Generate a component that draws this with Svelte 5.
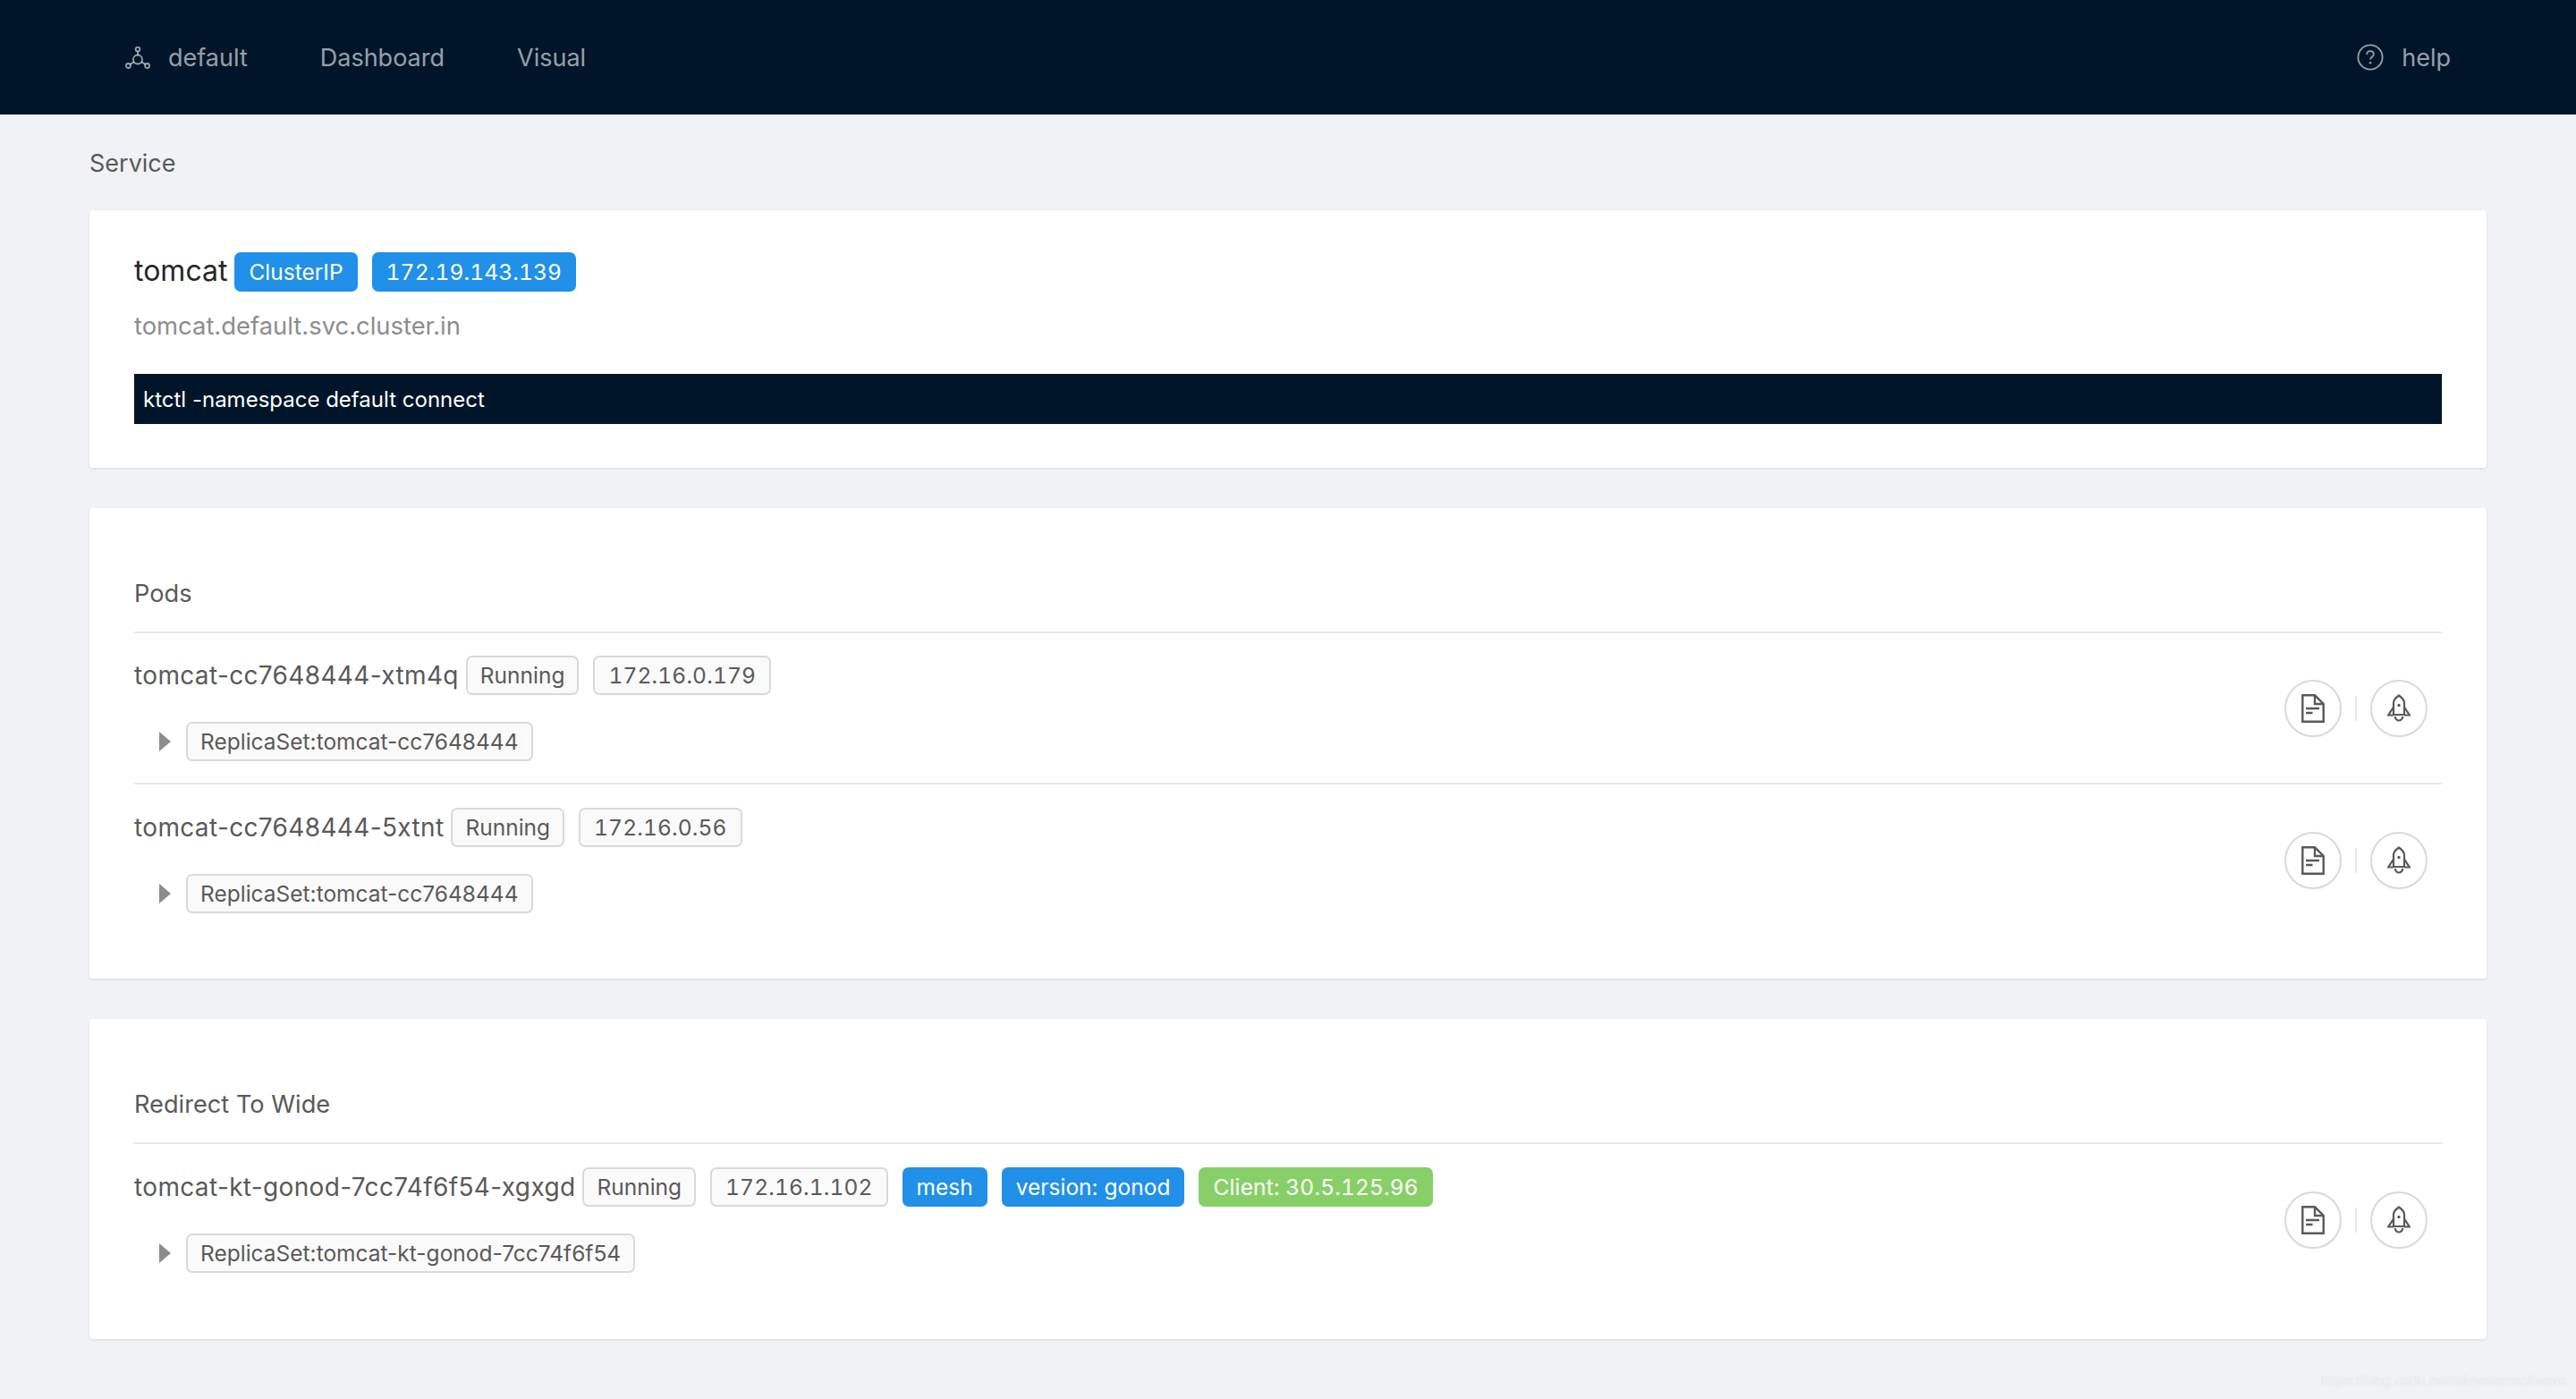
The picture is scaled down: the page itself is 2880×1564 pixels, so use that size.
<script lang="ts">
  const pods = [
    { name: 'tomcat-cc7648444-xtm4q', ip: '172.16.0.179', rs: 'ReplicaSet:tomcat-cc7648444', tags: [] },
    { name: 'tomcat-cc7648444-5xtnt', ip: '172.16.0.56', rs: 'ReplicaSet:tomcat-cc7648444', tags: [] }
  ];
  const wide = [
    {
      name: 'tomcat-kt-gonod-7cc74f6f54-xgxgd',
      ip: '172.16.1.102',
      rs: 'ReplicaSet:tomcat-kt-gonod-7cc74f6f54',
      tags: [
        { text: 'mesh', color: 'blue' },
        { text: 'version: gonod', color: 'blue' },
        { text: 'Client: 30.5.125.96', color: 'green ip' }
      ]
    }
  ];
  const sections = [
    { title: 'Pods', rows: pods, cls: 'pods' },
    { title: 'Redirect To Wide', rows: wide, cls: 'wide' }
  ];
</script>

<header class="nav">
  <div class="nav-left">
    <span class="nav-item first">
      <svg class="ns-icon" viewBox="0 0 28 25" fill="none" stroke="currentColor" stroke-width="1.800">
        <circle cx="14" cy="3" r="2.400" />
        <circle cx="14" cy="14.500" r="5" />
        <circle cx="3.400" cy="21.500" r="2.500" />
        <circle cx="24.600" cy="21.500" r="2.500" />
        <path d="M14 5.400v4.100M5.500 20.100l4.300-2.900M22.500 20.100l-4.300-2.900" />
      </svg>
      default
    </span>
    <span class="nav-item">Dashboard</span>
    <span class="nav-item">Visual</span>
  </div>
  <span class="nav-item help">
    <svg class="help-icon" viewBox="0 0 30 30" fill="none" stroke="currentColor" stroke-width="1.800">
      <circle cx="15" cy="15" r="13.600" />
      <path d="M11.200 12c0-2.300 1.700-3.800 3.800-3.800s3.800 1.400 3.800 3.500c0 3-3.800 3-3.800 5.900" />
      <circle cx="15" cy="21.300" r="1.300" fill="currentColor" stroke="none" />
    </svg>
    help
  </span>
</header>

<main class="page">
  <div class="crumb">Service</div>

  <section class="card service">
    <div class="svc-head">
      <span class="svc-name">tomcat</span>
      <span class="tag blue">ClusterIP</span>
      <span class="tag blue ip">172.19.143.139</span>
    </div>
    <div class="svc-domain">tomcat.default.svc.cluster.in</div>
    <div class="cmd">ktctl -namespace default connect</div>
  </section>

  {#each sections as section}
    <section class="card list {section.cls}">
      <h2 class="list-title">{section.title}</h2>
      {#each section.rows as row}
        <div class="row">
          <div class="row-main">
            <div class="row-head">
              <span class="pod-name">{row.name}</span>
              <span class="tag plain">Running</span>
              <span class="tag plain ip">{row.ip}</span>
              {#each row.tags as t}
                <span class="tag {t.color}">{t.text}</span>
              {/each}
            </div>
            <div class="row-sub">
              <span class="caret"></span>
              <span class="tag plain rs">{row.rs}</span>
            </div>
          </div>
          <div class="actions">
            <button class="round" aria-label="logs">
              <svg viewBox="0 0 26 32" width="26" height="32" fill="none" stroke="#595959" stroke-width="2.400">
                <path d="M1.300 1.300h13.700l9.700 9.700v19.700H1.300z" />
                <path d="M15 1.300v9.700h9.700" />
                <path d="M5 16h15M5 21h7.500" />
              </svg>
            </button>
            <span class="sep"></span>
            <button class="round" aria-label="deploy">
              <svg viewBox="0 0 26 31" width="26" height="31" fill="none" stroke="#595959" stroke-width="2.200">
                <path d="M13 1.500c2.500 1.800 6 4.500 6 8V23H7V9.500c0-3.500 3.500-6.200 6-8z" />
                <path d="M7 14.500L1.200 23.500H7M19 14.500l5.800 9H19" />
                <path d="M8.500 25c.8 2.800 2.300 4.500 4.500 4.500s3.700-1.700 4.500-4.500" />
                <circle cx="13" cy="12.500" r="1.700" fill="#595959" stroke="none" />
              </svg>
            </button>
          </div>
        </div>
      {/each}
    </section>
  {/each}
</main>

<div class="watermark">https://blog.csdn.net/alisystemsoftware</div>

<style>
  :global(body) {
    margin: 0;
    background: #f0f2f5;
    font-family: Inter, "Open Sans", sans-serif;
    color: #595959;
  }

  .nav {
    height: 128px;
    background: #001529;
    display: flex;
    align-items: center;
    justify-content: space-between;
    padding: 0 140px;
    box-sizing: border-box;
    color: rgba(255, 255, 255, 0.6);
    font-size: 27px;
  }

  .nav-left {
    display: flex;
    align-items: center;
    gap: 81px;
  }

  .nav-item {
    display: inline-flex;
    align-items: center;
  }

  .ns-icon {
    width: 28px;
    height: 25px;
    margin-right: 20px;
  }

  .help-icon {
    width: 30px;
    height: 30px;
    margin-right: 20px;
  }

  .page {
    padding: 0 100px;
  }

  .crumb {
    height: 107px;
    padding-top: 2px;
    box-sizing: border-box;
    display: flex;
    align-items: center;
    font-size: 27px;
    color: #595959;
  }

  .card {
    background: #fff;
    border-radius: 4px;
    box-shadow: 0 1px 3px rgba(0, 0, 0, 0.1);
    padding: 0 50px;
    margin-bottom: 45px;
  }

  .service {
    height: 288px;
    box-sizing: border-box;
    padding-top: 47px;
  }

  .svc-head {
    display: flex;
    align-items: center;
    height: 44px;
  }

  .svc-name {
    font-size: 32px;
    color: #262626;
    margin-right: 8px;
    padding-bottom: 3px;
  }

  .svc-domain {
    font-size: 27.400px;
    color: #8c8c8c;
    margin-top: 18px;
    line-height: 40px;
  }

  .cmd {
    margin-top: 34px;
    height: 56px;
    display: flex;
    align-items: center;
    padding: 0 10px;
    background: #001529;
    color: #fff;
    font-size: 24px;
  }

  .tag {
    display: inline-flex;
    align-items: center;
    box-sizing: border-box;
    height: 44px;
    padding: 0 16px;
    margin-right: 16px;
    border-radius: 7px;
    font-size: 24.500px;
    white-space: nowrap;
  }

  .tag.blue {
    background: #2190e8;
    color: #fff;
  }

  .tag.green {
    background: #87d068;
    color: #fff;
  }

  .tag.plain {
    background: #fafafa;
    border: 2px solid #d9d9d9;
    color: #595959;
    padding: 0 14px;
  }

  .tag.ip {
    font-variant-numeric: tabular-nums;
    letter-spacing: 0.150px;
    padding: 0 16px;
  }

  .tag.plain.ip {
    padding: 0 15px;
  }

  .tag.rs {
    padding: 0 14px;
  }

  .list {
    padding-top: 1px;
  }

  .pods {
    height: 526px;
    box-sizing: border-box;
  }

  .wide {
    height: 358px;
    box-sizing: border-box;
  }

  .list-title {
    margin: 0;
    height: 139px;
    padding-bottom: 26px;
    box-sizing: border-box;
    display: flex;
    align-items: flex-end;
    font-size: 27.200px;
    font-weight: 400;
    color: #595959;
    border-bottom: 2px solid #e8e8e8;
  }

  .row {
    display: flex;
    align-items: center;
    justify-content: space-between;
    height: 169px;
    box-sizing: border-box;
    border-bottom: 2px solid #e8e8e8;
    padding-right: 16px;
  }

  .row:last-child {
    border-bottom: none;
  }

  .row-main {
    display: flex;
    flex-direction: column;
    gap: 30px;
  }

  .row-head {
    display: flex;
    align-items: center;
  }

  .pod-name {
    font-size: 28px;
    letter-spacing: 0.350px;
    color: #595959;
    margin-right: 8px;
  }

  .row-sub {
    display: flex;
    align-items: center;
    padding-left: 28px;
  }

  .caret {
    width: 0;
    height: 0;
    border-style: solid;
    border-width: 11px 0 11px 13px;
    border-color: transparent transparent transparent #8c8c8c;
    margin-right: 17px;
  }

  .actions {
    display: flex;
    align-items: center;
  }

  .round {
    width: 64px;
    height: 64px;
    box-sizing: border-box;
    border-radius: 50%;
    background: #fff;
    border: 2px solid #d9d9d9;
    box-shadow: 0 2px 0 rgba(0, 0, 0, 0.015);
    display: flex;
    align-items: center;
    justify-content: center;
    padding: 0;
  }

  .sep {
    width: 2px;
    height: 28px;
    background: #e8e8e8;
    margin: 0 15px;
  }

  .watermark {
    position: absolute;
    right: 10px;
    top: 1535px;
    font-family: "Liberation Sans", sans-serif;
    font-size: 16px;
    color: rgba(255, 255, 255, 0.8);
    text-shadow: 0 0 1px rgba(0, 0, 0, 0.18);
  }
</style>
